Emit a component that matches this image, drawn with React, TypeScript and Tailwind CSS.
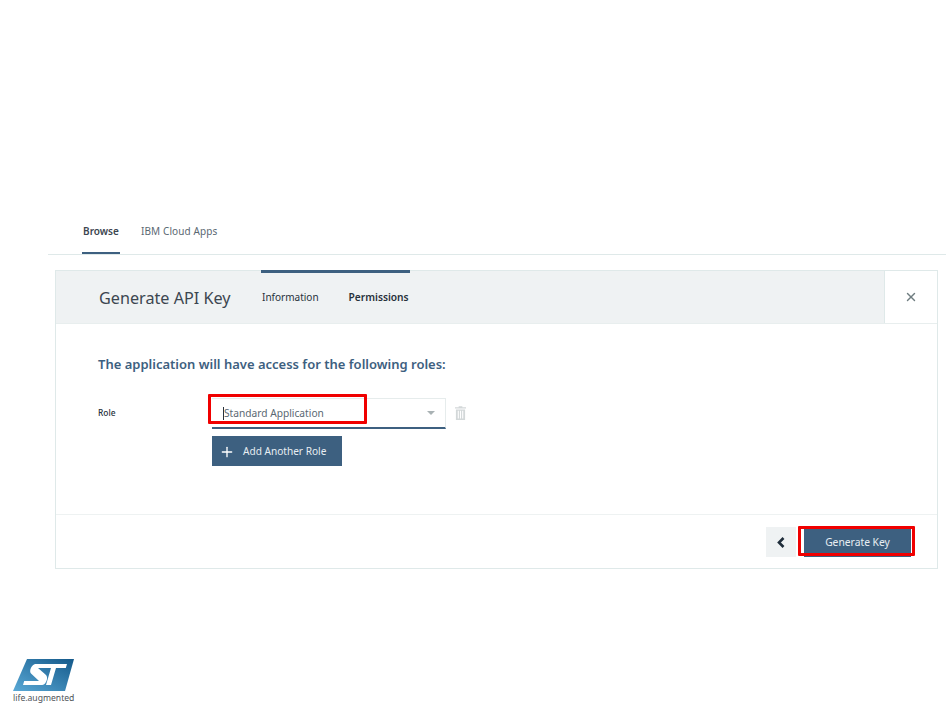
import React from 'react';
import { Plus, X } from 'lucide-react';

const StLogo = () => (
  <svg width="62" height="34" viewBox="0 0 62 34">
    <defs>
      <linearGradient id="stBlue" x1="0" y1="1" x2="1" y2="0">
        <stop offset="0" stopColor="#5aa9d6" />
        <stop offset="1" stopColor="#14598a" />
      </linearGradient>
    </defs>
    <path d="M14 1H61L52 33H0Z" fill="url(#stBlue)" />
    <path d="M22 6H54L52.8 10H43L38 27H33L38 10H25L33 17C35 19.5 34 23 32 25.5C31 26.5 29.5 27 28 27H10L11.2 23H26L18 15.5C16 13 18 7.5 22 6Z" fill="#fff" />
  </svg>
);

const TrashIcon = () => (
  <svg width="11" height="14" viewBox="0 0 12 15" className="mt-[-1px] ml-[9px]" fill="#d3d8d9">
    <path d="M4 0H8V1.2H12V2.6H0V1.2H4Z" />
    <path d="M1 3.6H11V15H1ZM3 5V13.5H4.2V5ZM5.4 5V13.5H6.6V5ZM7.8 5V13.5H9V5Z" fillRule="evenodd" />
  </svg>
);

export default function App() {
  return (
    <div className="relative h-[709px] w-[950px] overflow-hidden bg-white font-['Noto_Sans',sans-serif] text-[#1f2d3a]">
      {/* Tabs */}
      <div className="ml-12 mr-1 flex h-[255px] items-end gap-[21px] border-b border-[#dfe9e9] pl-[34px]">
        <div className="flex h-[47px] w-[38px] justify-center border-b-2 border-[#3d6080] pt-[1px] text-[10px] leading-[47px] font-semibold whitespace-nowrap text-[#3c4650]">Browse</div>
        <div className="h-[47px] pt-[1px] text-[10px] leading-[47px] tracking-[0.1px] whitespace-nowrap text-[#5a6872]">IBM Cloud Apps</div>
      </div>

      {/* Panel */}
      <div className="mt-[15px] ml-[55px] h-[299px] w-[883px] border border-[#dfe9e9]">
        <div className="flex h-[53px] border-b border-[#e8eeee] bg-[#eff2f3]">
          <div className="w-[205px] pl-[43px] text-[16.2px] leading-[54px] whitespace-nowrap text-[#3c4650]">Generate API Key</div>
          <div className="-mt-[1px] flex h-[54px] w-[149px] items-baseline gap-[30px] border-t-[3px] border-[#3d6080] pt-[17px] pl-[1px] text-[10px]">
            <span className="whitespace-nowrap text-[#27313b]">Information</span>
            <span className="text-[10.2px] font-semibold whitespace-nowrap text-[#27313b]">Permissions</span>
          </div>
          <div className="ml-auto flex w-[53px] items-center justify-center border-l border-[#dfe9e9] bg-white">
            <X size={14} strokeWidth={2.4} className="text-[#6f7d80]" />
          </div>
        </div>

        <div className="h-[191px] border-b border-[#eef2f2] pt-[32px] pl-[42px]">
          <h2 className="text-[13px] leading-[17px] font-semibold whitespace-nowrap text-[#3d6080]">The application will have access for the following roles:</h2>
          <div className="mt-[25px] flex">
            <div className="w-[114px] pt-[8px] text-[8.4px] leading-[14px] font-medium text-[#27313b]">Role</div>
            <div>
              <div className="flex items-start">
                <div className="flex h-[31px] w-[234px] items-center justify-between border-t border-r border-b-2 border-[#e6ecec] border-b-[#3d6080] pr-[10px] pl-[11px]">
                  <span className="border-l border-[#27313b] text-[10.2px] leading-[13px] whitespace-nowrap text-[#5a6872]">Standard Application</span>
                  <span className="h-0 w-0 border-x-[4px] border-t-[4px] border-x-transparent border-t-[#a9b2b4]" />
                </div>
                <div className="flex h-[31px] items-center"><TrashIcon /></div>
              </div>
              <button className="mt-[7px] flex h-[30px] w-[130px] items-center gap-[8px] bg-[#3d6080] pt-[1px] pl-[7px] text-[10.1px] whitespace-nowrap text-[#e8eef2]">
                <Plus size={16} strokeWidth={2} className="text-white" />
                Add Another Role
              </button>
            </div>
          </div>
        </div>

        <div className="flex h-[53px] items-center justify-end gap-[8px] pt-[1px] pr-[26px]">
          <div className="flex h-[30px] w-[30px] items-center justify-center bg-[#eff2f3]">
            <svg width="10" height="11" viewBox="0 0 10 11" fill="none" stroke="#1f2d3a" strokeWidth="2.6">
              <path d="M7.5 1L3 5.5L7.5 10" />
            </svg>
          </div>
          <button className="h-[30px] w-[107px] bg-[#3d6080] pt-[1px] text-[10.3px] whitespace-nowrap text-[#e8eef2]">Generate Key</button>
        </div>
      </div>

      {/* Logo */}
      <div className="mt-[89px] ml-[13px] flex w-[64px] flex-col">
        <StLogo />
        <span className="mt-[1px] text-[8.6px] leading-[10px] whitespace-nowrap text-[#4d5358]">life.augmented</span>
      </div>

      {/* Red annotation boxes */}
      <div className="absolute top-[394px] left-[208px] h-[30px] w-[159px] rounded-[1px] border-[3px] border-[#f00000]" />
      <div className="absolute top-[526px] left-[798px] h-[30px] w-[117px] rounded-[1px] border-[3px] border-[#f00000]" />
    </div>
  );
}
